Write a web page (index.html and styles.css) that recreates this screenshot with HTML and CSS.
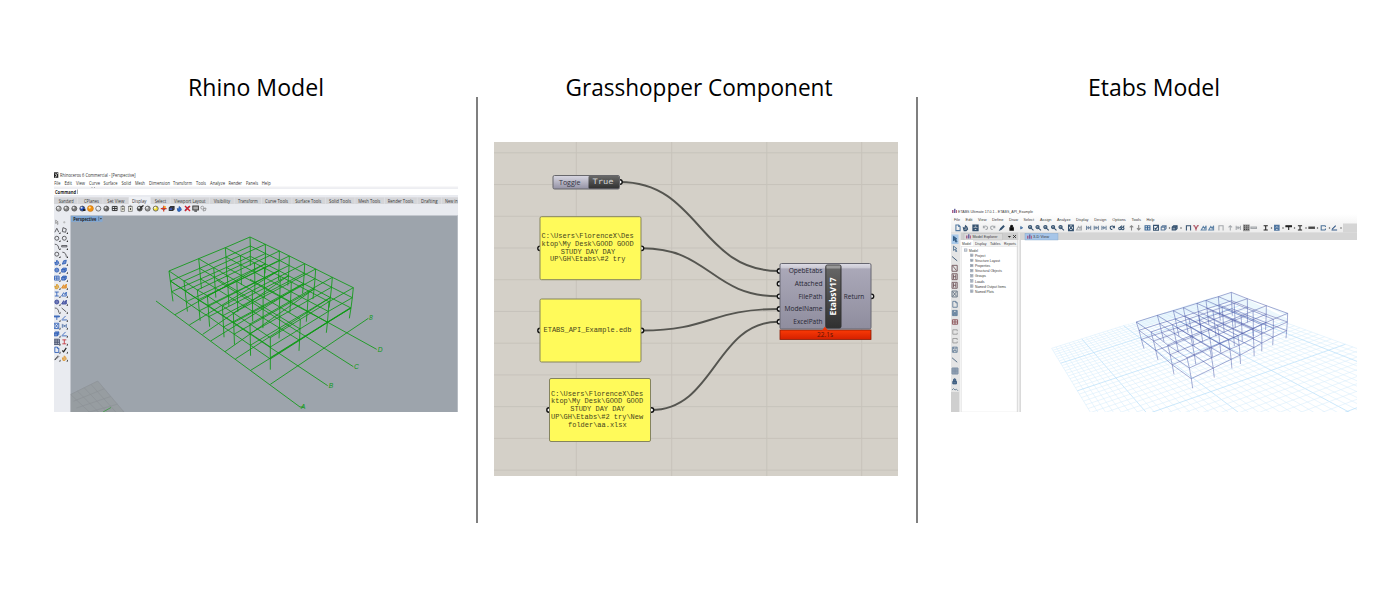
FILE: index.html
```html
<!DOCTYPE html>
<html lang="en">
<head>
<meta charset="utf-8">
<title>Rhino to Etabs workflow</title>
<link rel="stylesheet" href="styles.css">
</head>
<body>
<main class="board">
  <section class="stage">
    <svg class="heading" viewBox="0 60 476 50"><text x="188" y="95.500" textLength="136" lengthAdjust="spacingAndGlyphs">Rhino Model</text></svg>
    <svg id="rhino" class="shot rhino" viewBox="54 170 404 242"></svg>
  </section>
  <div class="rule"></div>
  <section class="stage">
    <svg class="heading" viewBox="478 60 438 50"><text x="565.500" y="95.500" textLength="267" lengthAdjust="spacingAndGlyphs">Grasshopper Component</text></svg>
    <svg id="hopper" class="shot hopper" viewBox="494 142 404 334">
      <defs>
        <linearGradient id="metal" x2="0" y2="1"><stop offset="0" stop-color="#dedde6"/><stop offset=".07" stop-color="#c9c8d3"/><stop offset=".08" stop-color="#aaa8b8"/><stop offset="1" stop-color="#8f8d9e"/></linearGradient>
        <linearGradient id="toggle" x2="0" y2="1"><stop offset="0" stop-color="#d9d8e2"/><stop offset="1" stop-color="#9391a4"/></linearGradient>
        <linearGradient id="dark" x2="0" y2="1"><stop offset="0" stop-color="#686868"/><stop offset="1" stop-color="#303030"/></linearGradient>
        <linearGradient id="red" x2="0" y2="1"><stop offset="0" stop-color="#fa3a06"/><stop offset="1" stop-color="#d42000"/></linearGradient>
      </defs>
    </svg>
  </section>
  <div class="rule"></div>
  <section class="stage">
    <svg class="heading" viewBox="918 60 481 50"><text x="1088" y="95.500" textLength="132" lengthAdjust="spacingAndGlyphs">Etabs Model</text></svg>
    <svg id="etabs" class="shot etabs" viewBox="951 206 406 206">
      <defs>
        <linearGradient id="bar" x2="0" y2="1"><stop offset="0" stop-color="#fff"/><stop offset="1" stop-color="#ececec"/></linearGradient>
      </defs>
    </svg>
  </section>
</main>
<script src="draw.js"></script>
</body>
</html>
```
FILE: styles.css
```css
body { margin: 0; background: #fff; }
.board { display: grid; grid-template-columns: 476px 2px 438px 2px 481px; height: 591px; overflow: hidden; }
.stage { display: flex; flex-direction: column; padding-top: 60px; }
.rule { background: #7f7f7f; margin: 97px 0 68px; }
svg { display: block; flex: none; }
.heading { width: 100%; height: 50px; }
.heading text { font: 23.500px "Open Sans", "Noto Sans", sans-serif; fill: #000; }
.shot { font-family: "Open Sans", "Noto Sans", sans-serif; }
.rhino { width: 404px; height: 242px; margin: 60px 0 0 54px; }
.hopper { width: 404px; height: 334px; margin: 32px 0 0 16px; }
.etabs { width: 406px; height: 206px; margin: 96px 0 0 33px; }
.tiny { fill: #333; font-size: 4.500px; }
.tiny-strong { fill: #222; font-size: 4.500px; font-weight: bold; }
.etabs .tiny { font-family: "Liberation Sans", sans-serif; font-size: 4.200px; fill: #3a3a3a; }
.frame-green { fill: none; stroke: #0a9910; stroke-width: 2.700; stroke-opacity: .92; }
.frame-blue { fill: none; stroke: #4a58a8; stroke-width: 1.900; stroke-opacity: .78; }
.mark { font: italic 20px "Liberation Sans", sans-serif; fill: #0c9a12; }
.panel { fill: #fffa5a; stroke: #85845d; }
.panel-text { font: 7px "Liberation Mono", monospace; fill: #45441c; white-space: pre; }
.port-text { font-size: 7.200px; fill: #262633; }
.wire { fill: none; stroke: #555550; stroke-width: 1.900; }
.port { fill: #fff; stroke: #111; stroke-width: 1.400; }
```
FILE: draw.js
```javascript
const NS = 'http://www.w3.org/2000/svg';

function add(parent, tag, attrs, content) {
  const el = document.createElementNS(NS, tag);
  for (const key in attrs) el.setAttribute(key, attrs[key]);
  if (content !== undefined) el.textContent = content;
  parent.appendChild(el);
  return el;
}
const box = (p, x, y, width, height, fill, extra) => add(p, 'rect', { x, y, width, height, fill, ...extra });
const line = (p, d, attrs) => add(p, 'path', { d, fill: 'none', ...attrs });
function label(p, x, y, str, width, cls = 'tiny', extra) {
  const a = { x, y, class: cls, ...extra };
  if (width) { a.textLength = width; a.lengthAdjust = 'spacingAndGlyphs'; }
  return add(p, 'text', a, str);
}

/* Frame geometry: joints of a level are the crossings of lines between opposite edges. */
function cross(a, b, c, d) {
  const den = (a[0] - b[0]) * (c[1] - d[1]) - (a[1] - b[1]) * (c[0] - d[0]);
  const m = a[0] * b[1] - a[1] * b[0], n = c[0] * d[1] - c[1] * d[0];
  return [(m * (c[0] - d[0]) - (a[0] - b[0]) * n) / den, (m * (c[1] - d[1]) - (a[1] - b[1]) * n) / den];
}
function building(p, near, far, start, end, drops, cls) {
  const levels = drops.map(drop => near.map((_, i) => start.map((_, j) => {
    const pt = j === 0 ? near[i] : j === 3 ? far[i] : i === 0 ? start[j] : i === 7 ? end[j] : cross(near[i], far[i], start[j], end[j]);
    const u = i / 7, v = j / 3;
    return [0, 1].map(k => pt[k] + (1 - u) * ((1 - v) * drop[0][k] + v * drop[1][k]) + u * ((1 - v) * drop[2][k] + v * drop[3][k]));
  })));
  const stroke = d => line(p, d, { class: cls });
  levels.slice(0, 3).forEach(g => {
    g.forEach(row => stroke('M' + row.join('L')));
    for (let j = 0; j < 4; j++) stroke('M' + g.map(row => row[j]).join('L'));
  });
  for (let i = 0; i < 8; i++) for (let j = 0; j < 4; j++) stroke('M' + levels.map(g => g[i][j]).join('L'));
  return levels;
}

/* Glyphs of the small tool buttons, drawn in a 8 by 8 cell. */
const glyphs = {
  page: 'M1 0H5L7 2V8H1ZM5 0V2H7', zoom: 'M5 3A2.300 2.300 0 1 1 .4 3A2.300 2.300 0 1 1 5 3M4.500 4.700L7.500 7.800M1.500 3H4',
  save: 'M.5 .5H7V7.500H.5ZM2 .5V3H5.500V.5M2 7.500V5H5.500V7.500', undo: 'M1 4A3 2.500 0 1 1 4 6.500M1 1V4H3.500',
  redo: 'M7 4A3 2.500 0 1 0 4 6.500M7 1V4H4.500', pen: 'M1 7L2 5L6 1L7 2L3 6Z', lock: 'M1 4H6V7.500H1ZM2 4V2A1.500 1.500 0 0 1 5 2V4',
  play: 'M2 1.500L6 4L2 6.500Z', frame: 'M.5 1H7.500V7H.5ZM.5 4H7.500M4 1V7', move: 'M0 4H8M4 0V8M2 2L4 0L6 2M2 6L4 8L6 6',
  elev: 'M1 1V7M7 1V7M1 4H7M3 2L5 4L3 6', glasses: 'M0 5A1.600 1.600 0 1 0 3.500 5A1.600 1.600 0 1 0 0 5M4 5A1.600 1.600 0 1 0 7.500 5A1.600 1.600 0 1 0 4 5M2 3L5 1M6 3L8 1',
  up: 'M4 8V1M1.500 3.500L4 1L6.500 3.500', down: 'M4 0V7M1.500 4.500L4 7L6.500 4.500', check: 'M.5 .5H7.500V7.500H.5ZM2 4L3.500 6L6.500 2',
  tick: 'M1 5L3 7L7 1', cube: 'M0 3L2 1H7V5L5 7H0ZM0 3H5V7M5 3L7 1', portal: 'M1 8V1H7V8', vee: 'M0 1H2L4 6L6 1H8M4 6V8', hill: 'M0 7L3 2L5 5L7 1V7Z',
  beam: 'M1 1H7M4 1V7M1 7H7', tee: 'M0 1H8V2.500H0ZM4 2V7', dash: 'M0 3H8V5H0Z', channel: 'M7 1H1V7H7M7 1V3M7 7V5', angle: 'M0 7H8M1 6L6 1',
  arrow: 'M2 0V6L3.500 4.500L5.500 8L6.500 7L4.500 4L6.500 3.500Z', diag: 'M0 1L7 7', brace: 'M0 0H7V8H0ZM1 1L6 7', cols: 'M0 0H7V8H0ZM2 1V7M5 1V7M2 4H5',
  ex: 'M0 0H7V8H0ZM1 1L6 7M6 1L1 7', poly: 'M1 7L3 2L7 1L6 6Z', circ: 'M1 4A3 3 0 1 0 7 4A3 3 0 1 0 1 4', arc: 'M1 1C5 1 7 4 7 8', ngon: 'M2 0L7 2L6 7L1 6Z',
  grid: 'M0 0H8V8H0ZM0 2.700H8M0 5.300H8M2.700 0V8M5.300 0V8', dot: 'M3 3H5V5H3Z', vee2: 'M1 7L4 1L7 7', wave: 'M0 4L2 2L4 4L6 3L8 5', hand: 'M2 8L1 4L3 5L4 1L6 3L7 6L5 8Z'
};
function glyph(p, name, cx, cy, size, stroke, fill = 'none', weight = 1.1) {
  add(p, 'path', { d: glyphs[name], transform: `translate(${cx - size / 2} ${cy - size / 2}) scale(${size / 8})`, stroke, fill, 'stroke-width': weight });
}

/* ---------- Rhino window ---------- */
const rh = document.getElementById('rhino');
box(rh, 54, 170, 404, 242, '#fff');
box(rh, 54, 172.300, 4.300, 5.500, '#222');
line(rh, 'M54.800 173.500L57 175.500L55 177.300M57.800 173L56.500 174.300', { stroke: '#fff', 'stroke-width': .8 });
label(rh, 60, 177, 'Rhinoceros 6 Commercial - [Perspective]', 75.500);
[['File', 54.300, 6.300], ['Edit', 64.500, 7.500], ['View', 76, 9], ['Curve', 89, 11], ['Surface', 103.500, 14], ['Solid', 121.500, 9.500], ['Mesh', 135, 10], ['Dimension', 149, 21], ['Transform', 173, 19], ['Tools', 196, 10], ['Analyze', 210, 15], ['Render', 228.500, 13.500], ['Panels', 246, 12], ['Help', 261.800, 9]]
  .forEach(([s, x, w]) => label(rh, x, 184.700, s, w));
box(rh, 54, 186.700, 404, .9, '#e6e7ec');
box(rh, 54, 188.300, 404, .7, '#e6e7ec');
box(rh, 91.500, 187, 1, .8, '#999'); box(rh, 94, 187, 1, .8, '#999');
label(rh, 55, 193.500, 'Command', 21, 'tiny-strong');
box(rh, 77.500, 189.500, .5, 4.500, '#555');
box(rh, 54, 195, 404, 217, '#e9ebf0');
box(rh, 54, 197.300, 404, 6.700, '#d4d5d8');
box(rh, 129, 197, 21.500, 7.300, '#eef0f4');
[['Standard', 58.700, 15], ['CPlanes', 84, 15], ['Set View', 107.300, 17], ['Display', 132, 14.500], ['Select', 154.700, 11.500], ['Viewport Layout', 174, 31.500], ['Visibility', 213.700, 16.500], ['Transform', 238, 19.700], ['Curve Tools', 265, 23], ['Surface Tools', 295.300, 26], ['Solid Tools', 329, 22], ['Mesh Tools', 358.300, 22], ['Render Tools', 387.700, 25.500], ['Drafting', 421, 16.500], ['New in', 445, 12.800]]
  .forEach(([s, x, w]) => { label(rh, x, 202.700, s, w); if (s !== 'New in') box(rh, x + w + 3.700, 197.300, .5, 6.700, '#e6e7ea'); });

const ball = (x, y, c, r = 2.5) => { add(rh, 'circle', { cx: x, cy: y, r, fill: c, stroke: '#555', 'stroke-width': .8 }); add(rh, 'circle', { cx: x - .7, cy: y - .8, r: r * .42, fill: '#fff', opacity: .85 }); };
[[58.700, '#aaa'], [66.300, '#888'], [74.300, '#777'], [82.300, '#1846b4'], [98.300, '#e2e4e8'], [106.300, '#666'], [139.700, '#444'], [147.700, '#999'], [155.700, '#f1dc35']]
  .forEach(([x, c]) => ball(x, 208.600, c));
add(rh, 'circle', { cx: 90.400, cy: 208.600, r: 3, fill: '#f2910f', stroke: '#b36812', 'stroke-width': .5 });
add(rh, 'circle', { cx: 89.700, cy: 207.600, r: 1.100, fill: '#ffe0a0' });
line(rh, 'M140.500 207.500L143.500 205.500', { stroke: '#222', 'stroke-width': 1.300 });
box(rh, 83, 209, 2.500, 2, '#222');
glyph(rh, 'frame', 114.700, 208.500, 5.500, '#333', 'none', 1.4);
[122.7, 130.3].forEach(x => { box(rh, x - 1.700, 206.300, 3.600, 5, '#e4e3d5', { stroke: '#666', 'stroke-width': .6 }); box(rh, x - .8, 205.500, 1.800, 1.300, '#666'); box(rh, x - .3, 208, 1, 2, '#444'); });
add(rh, 'circle', { cx: 163.700, cy: 208.600, r: 1.700, fill: '#3067cc' });
line(rh, 'M163.700 205.700V211.500M160.800 208.600H166.600', { stroke: '#d5391c', 'stroke-width': 1.200 });
box(rh, 163.700, 206, 2, 2, '#f3a62c');
glyph(rh, 'cube', 172, 208.500, 5.500, '#333', '#4058b9', 1.5);
glyph(rh, 'hand', 179.300, 208.500, 5.500, '#24519b', '#2f6fd0');
glyph(rh, 'pen', 187, 208.500, 5.500, '#2859aa', '#4b82cc'); line(rh, 'M185 206L190 211M190 206L185 211', { stroke: '#d3202a', 'stroke-width': 1.400 });
box(rh, 192.800, 206, 5.600, 4, '#aaa', { stroke: '#333', 'stroke-width': .9 }); box(rh, 194.300, 210.600, 2.700, 1, '#222');
glyph(rh, 'circ', 202.300, 207.700, 4, '#666'); glyph(rh, 'poly', 204.500, 209.500, 4, '#666');

const dark = '#4c4c50', blue = '#2f5fb8';
[['arrow', '#888'], ['dot', '#aaa'], ['vee2', dark], ['ngon', dark], ['circ', dark], ['circ', dark], ['arc', dark], ['dash', dark], ['circ', dark], ['arc', dark], ['hand', blue, 1], ['poly', blue, 1], ['circ', blue, 1], ['cube', blue, 1], ['frame', blue], ['cube', blue, 1], ['hand', '#d89a28', 1], ['hill', '#df8619', 1], ['beam', blue], ['hill', blue], ['circ', '#36459a', 1], ['hill', '#36459a', 1], ['arc', dark], ['diag', dark], ['tee', blue, 1], ['angle', blue], ['ex', blue], ['elev', '#5574a8'], ['cube', blue, 1], ['angle', blue], ['grid', '#46506e'], ['beam', '#c4343c', 1], ['page', blue], ['tick', '#222'], ['pen', dark], ['hand', '#df9a35', 1]]
  .forEach(([name, c, solid], k) => {
    const x = k % 2 ? 64.300 : 56.800, y = 222.300 + Math.floor(k / 2) * 7.970;
    glyph(rh, name, x, y, name === 'dot' || name === 'arrow' ? 4.500 : 5.300, c, solid ? c + 'aa' : 'none', name === 'tick' ? 1.800 : 1.300);
    if (k > 1) line(rh, `M${x + 3.700} ${y + 1.700}V${y + 3.700}H${x + 2}Z`, { style: 'fill:#333' });
  });

box(rh, 70.500, 215.500, 387.500, 196.500, '#9da4ac');
box(rh, 457.300, 215.500, .7, 196.500, '#c3c8cd');
box(rh, 71, 215.800, 31.500, 6, '#82a8d3');
label(rh, 73.300, 220.600, 'Perspective', 23, 'tiny-strong');
box(rh, 98.700, 216.500, .4, 4.500, '#333'); line(rh, 'M99.800 218.300H102L100.900 219.600Z', { style: 'fill:#222' });

/* Corner of the construction plane, clipped to the viewport. */
const corner = add(rh, 'svg', { x: 70.500, y: 375, width: 60, height: 37, viewBox: '70.500 375 60 37' });
let floor = '';
for (let k = 1; k <= 4; k++) {
  const t = k / 4;
  floor += `M${97.700 + t * 26} ${381 + t * 31}L${70.500 + t * 12} ${394.500 + t * 27}`;
  floor += `M${97.700 - t * 27} ${381 + t * 13.500}L${124 - t * 22} ${412 + t * 12}`;
}
line(corner, 'M97.700 381L70.500 394.500V412H124Z', { style: 'fill:#979da1' });
line(corner, 'M97.700 381L70.500 394.500M97.700 381L124 412' + floor, { stroke: '#8b9195', 'stroke-width': .6 });
line(corner, 'M103 412L111 407.500', { stroke: '#3c9943', 'stroke-width': .8 });

const gr = add(rh, 'g', { transform: 'translate(150 225) scale(.33333)' });
const rhLevels = building(gr,
  [[57, 138], [102, 168], [142, 195], [172, 212], [217, 243], [250, 264], [300, 297], [361, 338]],
  [[300, 36], [346, 58], [388, 78], [418, 93], [464, 116], [497, 132], [547, 157], [610, 188]],
  [[57, 138], [146, 101], [226, 68], [300, 36]], [[361, 338], [451, 283], [537, 230], [610, 188]],
  [[[0, 0], [0, 0], [0, 0], [0, 0]], [[4, 30], [1, 27], [0, 28], [-3, 30]], [[8, 62], [1, 58], [0, 64], [-7, 61]], [[12, 91], [1, 86], [0, 96], [-12, 92]]], 'frame-green');
let axes = 'M18 228L450 546H462M361 478L655 280M61 168L533 482M200 165L610 425M300 163L680 373M361 398L600 249';
[[75, 269], [118, 300], [158, 328], [182, 348], [225, 380], [256, 402], [302, 436]].forEach((n, k) => { axes += 'M' + n + 'L' + rhLevels[2][k + 1][3]; });
line(gr, axes, { class: 'frame-green' });
[['A', 453, 552], ['B', 536, 489], ['C', 612, 432], ['D', 683, 380], ['8', 657, 285]].forEach(([s, x, y]) => label(gr, x, y, s, 0, 'mark'));

/* ---------- Grasshopper canvas ---------- */
const gh = document.getElementById('hopper');
box(gh, 494, 142, 404, 334, '#d4d0c8');
[576.3, 671.7, 766.8, 861.7].forEach(x => box(gh, x - .5, 142, 1, 334, '#c7c3bb'));
for (let k = 0; k < 11; k++) box(gh, 494, 152.300 + k * 31.730, 404, 1, '#c7c3bb');
[[620, 182, 271], [642, 248.300, 296.300], [642, 330.500, 309], [651, 410, 321.700]].forEach(([x, y, y2]) => {
  const mid = (x + 779) / 2;
  line(gh, `M${x} ${y}C${mid} ${y} ${mid} ${y2} 779 ${y2}`, { class: 'wire' });
});
const port = (x, y) => add(gh, 'circle', { cx: x, cy: y, r: 2.200, class: 'port' });
[[620, 182], [540, 248.300], [641.500, 248.300], [540, 330.500], [641.500, 330.500], [549, 410], [651.500, 410], [779.5, 271], [779.5, 283.700], [779.5, 296.300], [779.5, 309], [779.5, 321.700], [871.500, 296.300]].forEach(c => port(...c));

box(gh, 553, 175.500, 66.500, 13.500, 'url(#toggle)', { rx: 1.500, stroke: '#67676b' });
box(gh, 588.500, 176, 30.500, 12.500, 'url(#dark)', { rx: 1 });
label(gh, 559, 184.800, 'Toggle', 21.500, '', { 'font-size': 7, fill: '#333342' });
label(gh, 592.500, 184.300, 'True', 21, '', { 'font-size': 7.500, fill: '#d4d4d4', style: 'font-family:"DejaVu Sans Mono",monospace' });

[[540, 216.700], [540, 299], [549.500, 378.500]].forEach(([x, y]) => box(gh, x, y, 101, 63, '', { rx: 1.500, class: 'panel' }));
[['C:\\Users\\FlorenceX\\Des', 541.500, 238.300], ['ktop\\My Desk\\GOOD GOOD', 541.500, 246], ['STUDY DAY DAY', 560.700, 253.600], ['UP\\GH\\Etabs\\#2 try', 550, 261.200], ['ETABS_API_Example.edb', 543.500, 332.300],
 ['C:\\Users\\FlorenceX\\Des', 551, 395.700], ['ktop\\My Desk\\GOOD GOOD', 551, 403.400], ['STUDY DAY DAY', 570.300, 411.100], ['UP\\GH\\Etabs\\#2 try\\New', 551, 418.800], ['folder\\aa.xlsx', 568, 426.500]]
  .forEach(([s, x, y]) => label(gh, x, y, s, s.length * 4.190, 'panel-text'));

box(gh, 780, 330, 91, 9.500, 'url(#red)', { stroke: '#8a1a04', 'stroke-width': .8 });
box(gh, 780, 263.500, 91, 65.500, 'url(#metal)', { rx: 1.500, stroke: '#666670' });
line(gh, 'M822 330.500L825 326.500L828 330.500Z', { style: 'fill:#f03408' });
box(gh, 825.800, 265, 15.200, 63, 'url(#dark)', { rx: 1.500, stroke: '#333' });
box(gh, 826.500, 265.500, 13.800, 3, '#999');
[['OpebEtabs', 788.700, 33.800, 273.300], ['Attached', 794.700, 27.800, 286], ['FilePath', 798.500, 24, 298.700], ['ModelName', 784.500, 38, 311.400], ['ExcelPath', 793.300, 29.200, 324]]
  .forEach(([s, x, w, y]) => label(gh, x, y, s, w, 'port-text'));
label(gh, 843.800, 298.700, 'Return', 20.500, 'port-text');
label(gh, 0, 0, 'EtabsV17', 38, '', { transform: 'translate(836.200 315.500) rotate(-90)', 'font-size': 8.700, 'font-weight': 'bold', fill: '#fff' });
label(gh, 817, 337.300, '22.1s', 16, '', { 'font-size': 7, fill: '#5c1405' });

/* ---------- Etabs window ---------- */
const et = document.getElementById('etabs');
box(et, 951, 206, 406, 206, '#fff');
const vp = add(et, 'svg', { x: 1021, y: 240, width: 336, height: 172, viewBox: '1021 240 336 172' });
const eg = add(vp, 'g', { transform: 'translate(1040 280) scale(.33333)' });

/* Projective map of the unit square onto the visible ground plane. */
const Q = [[35, 205], [525, 51], [1300, 332], [340, 709]];
const [dx1, dy1, dx2, dy2] = [Q[1][0] - Q[2][0], Q[1][1] - Q[2][1], Q[3][0] - Q[2][0], Q[3][1] - Q[2][1]];
const sx = Q[0][0] - Q[1][0] + Q[2][0] - Q[3][0], sy = Q[0][1] - Q[1][1] + Q[2][1] - Q[3][1];
const det = dx1 * dy2 - dx2 * dy1, g = (sx * dy2 - dx2 * sy) / det, h = (dx1 * sy - sx * dy1) / det;
const ground = (u, v) => {
  const w = g * u + h * v + 1;
  return [0, 1].map(k => (Q[0][k] + (Q[1][k] - Q[0][k] + g * Q[1][k]) * u + (Q[3][k] - Q[0][k] + h * Q[3][k]) * v) / w);
};
for (let k = 0; k <= 40; k++) {
  const t = k / 40, major = k % 10 === 7;
  line(eg, `M${ground(t, 0)}L${ground(t, 1)}M${ground(0, t)}L${ground(1, t)}`, { stroke: major ? '#b9e0f9' : '#d8eefc', 'stroke-width': major ? 2.200 : 1.700 });
}
add(eg, 'path', { d: 'M289 126L574 37L743 100V125L574 62L300 145Z', fill: '#dff1fb', opacity: .6 });
add(eg, 'path', { d: 'M250 138L525 46L574 36L800 142L574 20L500 20Z', fill: '#fff' });
building(eg,
  [[441, 233], [509, 203], [565, 178], [594, 167], [638, 146], [664, 134], [700, 118], [743, 100]],
  [[289, 126], [352, 106], [400, 92], [430, 83], [471, 70], [498, 61], [535, 50], [574, 37]],
  [[441, 233], [383, 195], [333, 156], [289, 126]], [[743, 100], [679, 77], [622, 56], [574, 37]],
  [[[0, 0], [0, 0], [0, 0], [0, 0]], [[7, 31], [8, 25], [-1, 26], [1, 25]], [[13, 63], [15, 52], [-3, 52], [2, 49]], [[17, 92], [23, 80], [-5, 75], [3, 70]]], 'frame-blue');

box(et, 951, 206, 406, 8, '#fff');
box(et, 951, 214, 406, 18.500, 'url(#bar)');
box(et, 951, 232.300, 406, 7.700, '#d5d5d5');
box(et, 1343, 223.500, 14, 9, '#d5d5d5');
const logo = (x, y) => { box(et, x, y - 3, 1.500, 3, '#a8618a'); box(et, x + 2, y - 4.200, 1.500, 4.200, '#6a66a0'); box(et, x + 4, y - 3, 1, 3, '#b4688a'); };
logo(952, 213);
label(et, 958, 212.700, 'ETABS Ultimate 17.0.1 - ETABS_API_Example', 75);
[['File', 954, 6], ['Edit', 965.500, 7], ['View', 978, 8.500], ['Define', 992, 11.500], ['Draw', 1009, 9], ['Select', 1023.500, 10.500], ['Assign', 1040, 11.500], ['Analyze', 1057, 13.500], ['Display', 1076, 12.500], ['Design', 1094.300, 12], ['Options', 1112.300, 13.500], ['Tools', 1131.500, 9.500], ['Help', 1146.500, 8]]
  .forEach(([s, x, w]) => label(et, x, 220.500, s, w));

const navy = '#34516f', pale = '#a4a8ac';
[['page', 958, '#5278a0'], ['hand', 965.500, navy, 1], ['save', 975.700, navy], ['undo', 985.500, pale], ['redo', 992.700, pale], ['pen', 1002, navy, 1], ['lock', 1012, '#222', 1], ['play', 1021.700, '#2c5f9a', 1], ['zoom', 1031, navy], ['zoom', 1038.500, navy], ['zoom', 1046.300, navy], ['zoom', 1054, navy], ['zoom', 1061.500, navy], ['ex', 1071.300, navy], ['hill', 1079.300, pale], ['elev', 1088.600, '#7187a0'], ['elev', 1096.300, '#7187a0'], ['elev', 1104, '#7187a0'], ['redo', 1112.300, navy], ['glasses', 1121.500, navy], ['up', 1131.500, '#888'], ['down', 1138.700, '#888'], ['frame', 1147.500, '#3a6797'],
 ['check', 1156, navy], ['cube', 1164, '#5c7a9b'], ['cube', 1175, navy, 1], ['portal', 1188.500, navy], ['vee', 1196, '#a74858'], ['hill', 1204, '#5e83a7'], ['hill', 1211.500, '#5e83a7'], ['portal', 1221, pale], ['up', 1230.300, pale], ['elev', 1238.300, pale], ['grid', 1246.300, '#999', 1], ['dash', 1253.700, pale], ['beam', 1265.700, '#222'], ['save', 1277, '#5076a0'], ['tee', 1288.700, '#222', 1], ['beam', 1300, '#222', 1], ['dash', 1311.700, '#555', 1], ['channel', 1323.300, '#4b7198'], ['angle', 1334.300, '#335887']]
  .forEach(([n, x, c, solid]) => glyph(et, n, x, 227.800, n === 'play' ? 4 : n === 'save' && x < 1000 ? 6.300 : 5.600, c, solid ? c + '90' : 'none', 1.500));
[1169.5, 1181, 1271.5, 1283, 1294.5, 1306, 1317.5, 1329.5, 1341].forEach(x => box(et, x - .6, 227.500, 1.200, 1, '#222'));

box(et, 951, 232.500, 9, 179.500, '#e5e5e5');
box(et, 951, 392, 8, 20, '#cfcfcf');
box(et, 951.500, 234.500, 7, 9.500, '#a9c9e9');
[['arrow', 239.300, '#29547e', 1], ['arrow', 249, '#557593'], ['diag', 258.700, navy], ['brace', 268.300, '#70555b'], ['cols', 276.700, '#70555b'], ['cols', 285.300, '#70555b'], ['ex', 294, '#5c6c7c'], ['page', 304.300, '#607c98'], ['save', 313, '#66829e', 1], ['frame', 322, '#884b50'], ['channel', 332, '#999'], ['channel', 340.700, '#999'], ['save', 349.700, '#6a829b'], ['diag', 360, '#48627c'], ['grid', 371, '#607894'], ['lock', 381.300, '#34567c', 1], ['wave', 390, '#657b90']]
  .forEach(([n, y, c, solid]) => glyph(et, n, 955, y, 5.900, c, solid ? c + 'cc' : 'none', 1.200));
box(et, 960, 232.500, 59.500, 179.500, '#f3f3f3');
box(et, 960.500, 232.500, 58, 7.500, '#cecece');
box(et, 964, 233.500, 38.500, 6.500, '#dadada', { stroke: '#b8b8b8', 'stroke-width': .4 });
logo(966, 238.500);
label(et, 972.500, 238.200, 'Model Explorer', 25);
line(et, 'M1007.800 236H1011L1009.400 237.800Z', { style: 'fill:#222' });
line(et, 'M1013 235L1016 238M1016 235L1013 238', { stroke: '#222', 'stroke-width': .8 });
box(et, 961, 240, 12, 6, '#fff');
[['Model', 962, 9], ['Display', 975, 11.500], ['Tables', 990, 10.500], ['Reports', 1004, 12]].forEach(([s, x, w]) => label(et, x, 245.200, s, w));
box(et, 961.500, 246.500, 55.500, 165.500, '#fff', { stroke: '#dadada', 'stroke-width': .4 });
box(et, 1019.700, 240, .8, 172, '#b5b5b5');
box(et, 1017.500, 240, .5, 172, '#ccc');
[['Model', 969, 9], ['Project', 975, 10.500], ['Structure Layout', 975, 25], ['Properties', 975, 15.300], ['Structural Objects', 975, 27], ['Groups', 975, 11], ['Loads', 975, 9.500], ['Named Output Items', 975, 31], ['Named Plots', 975, 19]]
  .forEach(([s, x, w], k) => {
    const y = 251.800 + k * 5.130;
    label(et, x, y, s, w);
    box(et, x - 4.500, y - 2.900, 2.500, 2.500, '#fff', { stroke: '#8795a8', 'stroke-width': .5 });
    line(et, `M${x - 4.500} ${y - 1.650}h2.500${k ? 'm-1.250 -1.250v2.500' : ''}`, { stroke: '#5c6c80', 'stroke-width': .5 });
  });
box(et, 1025, 233.300, 33, 6.700, '#a6c5e8', { stroke: '#82a3c6', 'stroke-width': .4 });
logo(1027, 238.700);
label(et, 1033, 238.300, '3-D View', 16);
```
